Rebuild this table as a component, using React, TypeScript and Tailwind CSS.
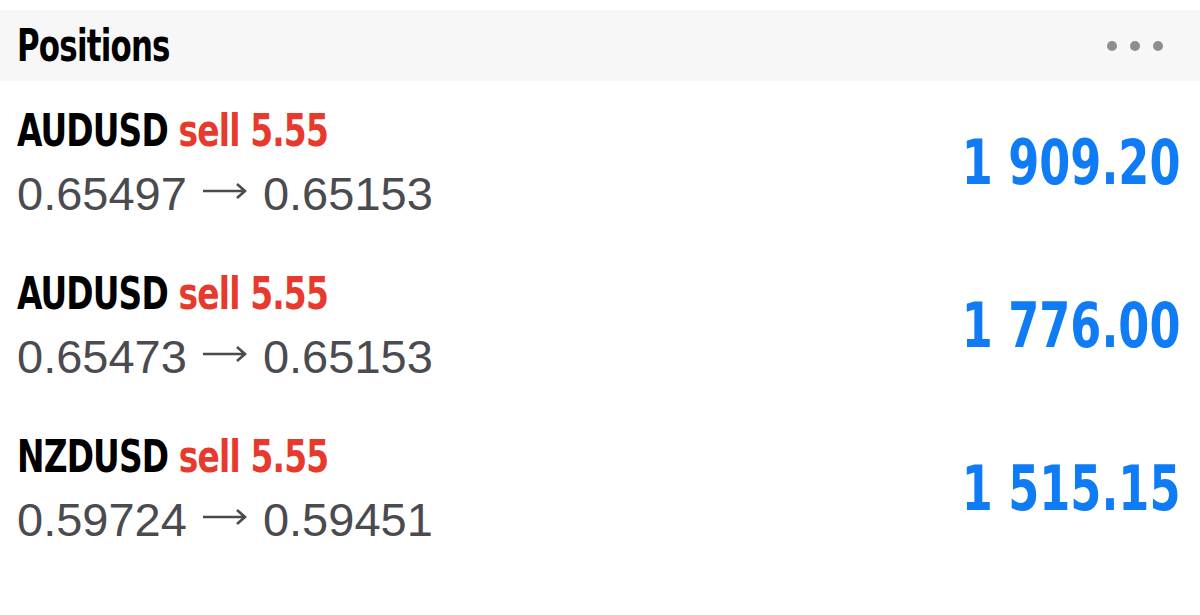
const positions = [
  { symbol: "AUDUSD", side: "sell", volume: "5.55", open: "0.65497", current: "0.65153", profit: "1 909.20" },
  { symbol: "AUDUSD", side: "sell", volume: "5.55", open: "0.65473", current: "0.65153", profit: "1 776.00" },
  { symbol: "NZDUSD", side: "sell", volume: "5.55", open: "0.59724", current: "0.59451", profit: "1 515.15" },
];

const condensed = "font-['DejaVu_Sans_Condensed','DejaVu_Sans',sans-serif] font-bold";

const Arrow = () => (
  <svg width="46" height="20" viewBox="0 0 46 20" className="mx-[15px] mb-[6px] inline-block" fill="none">
    <path d="M1 10h42M35 3l8 7-8 7" stroke="#4a4a4f" strokeWidth="2.6" />
  </svg>
);

const PositionRow = ({ p }: { p: (typeof positions)[number] }) => {
  return (
    <div className="flex h-[163px] items-center justify-between pl-[17px] pr-[20px]">
      <div className="flex flex-col">
        <div className={`${condensed} inline-block origin-left scale-x-[0.83] whitespace-nowrap text-[44px] leading-[50px] tracking-[-1px]`}>
          <span className="text-black">{p.symbol}</span>{" "}
          <span className="text-[#e8392d]">
            {p.side} {p.volume}
          </span>
        </div>
        <div className="mt-[12px] flex items-center whitespace-nowrap font-['Liberation_Sans',Arial,sans-serif] text-[47px] leading-[52px] text-[#4a4a4f]">
          <span>{p.open}</span>
          <Arrow />
          <span>{p.current}</span>
        </div>
      </div>
      <div className={`${condensed} origin-right scale-x-[0.8] whitespace-nowrap text-[62px] leading-none text-[#0f7cf6]`}>
        {p.profit}
      </div>
    </div>
  );
};

const App = () => {
  return (
    <div className="h-[615px] w-[1200px] bg-white pt-[10px]">
      <div className="flex h-[71px] items-center justify-between bg-[#f7f7f7] pl-[17px] pr-[37px]">
        <span className={`${condensed} inline-block origin-left scale-x-[0.78] text-[44px] tracking-[-1px] text-black`}>
          Positions
        </span>
        <div className="flex gap-[13px]">
          <span className="h-[10px] w-[10px] rounded-full bg-[#8e8e8e]" />
          <span className="h-[10px] w-[10px] rounded-full bg-[#8e8e8e]" />
          <span className="h-[10px] w-[10px] rounded-full bg-[#8e8e8e]" />
        </div>
      </div>
      {positions.map((p, i) => (
        <PositionRow key={i} p={p} />
      ))}
    </div>
  );
};

export default App;
